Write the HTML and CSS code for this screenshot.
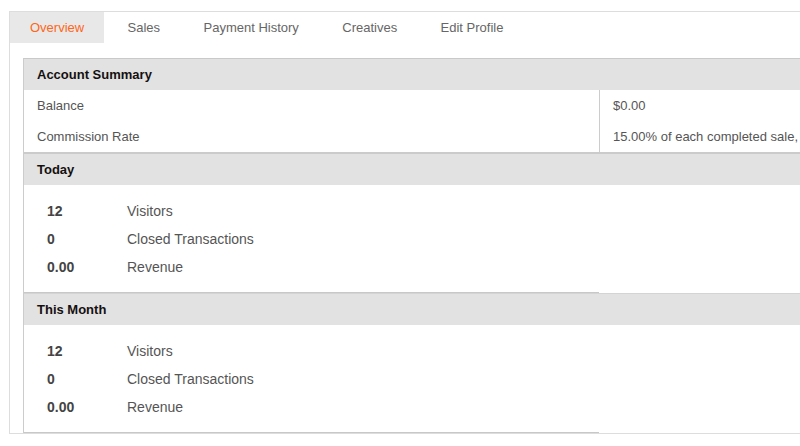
FILE: index.html
```html
<!DOCTYPE html>
<html>
<head>
<meta charset="utf-8">
<link rel="stylesheet" href="styles.css">
</head>
<body>
<div class="wrap">
  <ul class="tabs">
    <li class="tab active">Overview</li>
    <li class="tab">Sales</li>
    <li class="tab">Payment History</li>
    <li class="tab">Creatives</li>
    <li class="tab">Edit Profile</li>
  </ul>
  <div class="panel">
    <div class="sec-head first">Account Summary</div>
    <div class="summary">
      <div class="s-label">Balance</div>
      <div class="s-value">$0.00</div>
      <div class="s-label">Commission Rate</div>
      <div class="s-value">15.00% of each completed sale,</div>
    </div>
    <div class="sec-head thick">Today</div>
    <div class="stats">
      <div class="stats-left">
        <div class="stat"><span class="num">12</span><span class="lbl">Visitors</span></div>
        <div class="stat"><span class="num">0</span><span class="lbl">Closed Transactions</span></div>
        <div class="stat"><span class="num">0.00</span><span class="lbl">Revenue</span></div>
      </div>
    </div>
    <div class="sec-head light">This Month</div>
    <div class="stats">
      <div class="stats-left">
        <div class="stat"><span class="num">12</span><span class="lbl">Visitors</span></div>
        <div class="stat"><span class="num">0</span><span class="lbl">Closed Transactions</span></div>
        <div class="stat"><span class="num">0.00</span><span class="lbl">Revenue</span></div>
      </div>
    </div>
  </div>
</div>
</body>
</html>
```

FILE: styles.css
```css
html, body {
  margin: 0;
  padding: 0;
  overflow: hidden;
  background: #fff;
}
body {
  font-family: "Liberation Sans", Arial, sans-serif;
  font-size: 13px;
  color: #555;
}
.wrap {
  margin: 11px 0 0 9px;
  width: 1000px;
  border: 1px solid #dddddd;
}
.tabs {
  list-style: none;
  margin: 0;
  padding: 0;
  display: flex;
  gap: 3.4px;
  height: 31px;
}
.tab {
  padding: 0 20px;
  line-height: 31px;
  font-size: 13px;
  color: #666;
  white-space: nowrap;
}
.tab.active {
  background: #e8e8e8;
  color: #ff6619;
}
.panel {
  margin: 15px 0 0 13px;
  border-left: 1px solid #cccccc;
}
.sec-head {
  height: 31px;
  line-height: 31px;
  padding-left: 13px;
  background: #e2e2e2;
  font-weight: bold;
  font-size: 13px;
  color: #151010;
}
.sec-head.first { border-top: 1px solid #c9c9c9; }
.sec-head.thick { border-top: 2px solid #cbcbcb; }
.sec-head.light { border-top: 1px solid #d4d4d4; }
.summary {
  display: grid;
  grid-template-columns: 575px 1fr;
}
.s-label, .s-value {
  height: 31px;
  line-height: 31px;
  padding-left: 13px;
  white-space: nowrap;
  color: #555;
}
.s-value {
  border-left: 1px solid #cccccc;
}
.stats-left {
  width: 575px;
  padding: 12px 0 11px;
  border-bottom: 1px solid #c8c8c8;
}
.stat {
  display: flex;
  height: 28px;
  line-height: 28px;
  font-size: 14px;
}
.num {
  width: 80px;
  padding-left: 23px;
  font-weight: bold;
  color: #444;
}
.lbl {
  color: #555;
}
```
